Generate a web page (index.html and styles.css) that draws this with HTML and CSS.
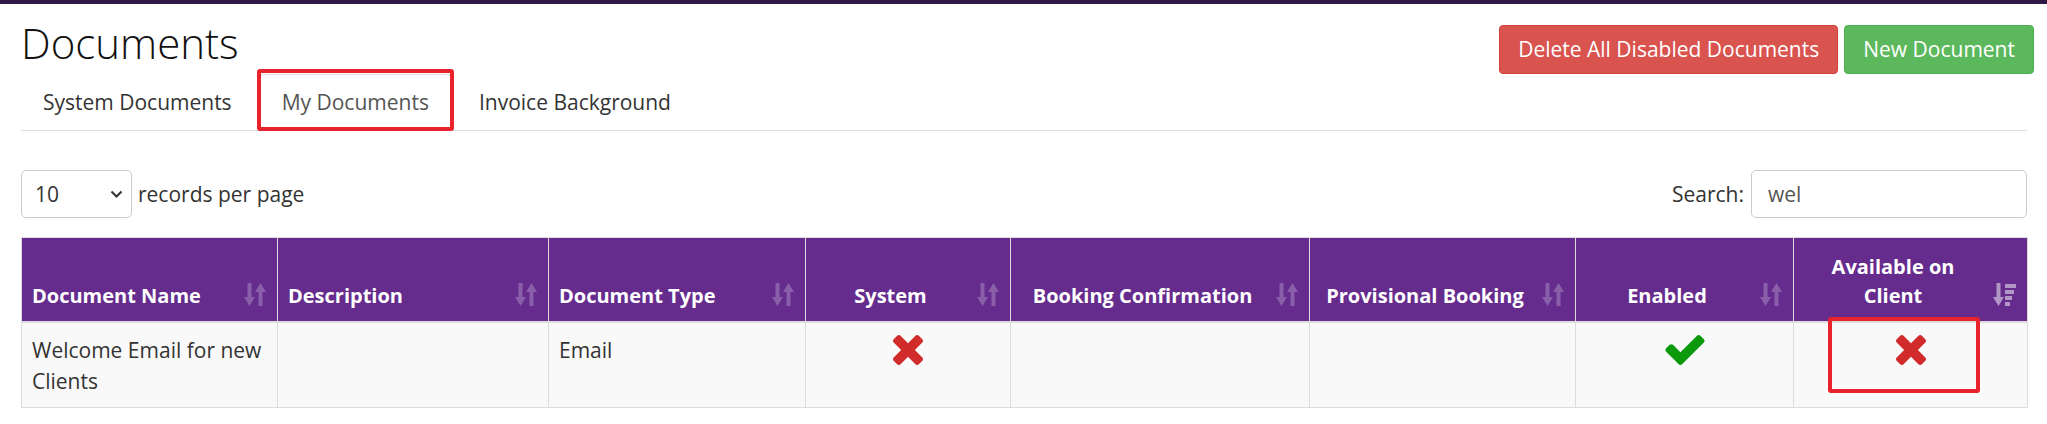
FILE: index.html
```html
<!DOCTYPE html>
<html lang="en">
<head>
    <meta charset="UTF-8">
    <meta name="viewport" content="width=device-width, initial-scale=1.0">
    <title>Documents</title>
    <link rel="stylesheet" href="styles.css">
</head>
<body>
    <div class="topbar"></div>

    <div class="page">
        <div class="header">
            <h1>Documents</h1>
            <div class="actions">
                <button type="button" class="btn btn-danger">Delete All Disabled Documents</button>
                <button type="button" class="btn btn-success">New Document</button>
            </div>
        </div>

        <ul class="tabs">
            <li><a href="#">System Documents</a></li>
            <li class="active"><a href="#">My Documents</a><span class="annot annot-tab"></span></li>
            <li><a href="#">Invoice Background</a></li>
        </ul>

        <!-- records per page + search -->
        <div class="toolbar">
            <label class="length">
                <span class="select-wrap">
                    <select>
                        <option>10</option>
                        <option>25</option>
                        <option>50</option>
                    </select>
                    <svg class="chevron" width="13" height="9" viewBox="0 0 13 9"><path d="M1.5 1.5 L6.5 6.5 L11.5 1.5" fill="none" stroke="#333" stroke-width="2"/></svg>
                </span>
                records per page
            </label>
            <label class="search">
                Search:
                <input type="text" value="wel">
            </label>
        </div>

        <table class="grid">
            <colgroup>
                <col style="width:256px">
                <col style="width:271px">
                <col style="width:257px">
                <col style="width:205px">
                <col style="width:299px">
                <col style="width:266px">
                <col style="width:218px">
                <col style="width:234px">
            </colgroup>
            <thead>
                <tr>
                    <th>Document Name<svg class="sort" viewBox="0 0 22 23"><path d="M3.5 0h4v14h3.5l-5.5 9-5.5-9h3.5z M14.5 23h4v-14h3.5l-5.5-9-5.5 9h3.5z"/></svg></th>
                    <th>Description<svg class="sort" viewBox="0 0 22 23"><path d="M3.5 0h4v14h3.5l-5.5 9-5.5-9h3.5z M14.5 23h4v-14h3.5l-5.5-9-5.5 9h3.5z"/></svg></th>
                    <th>Document Type<svg class="sort" viewBox="0 0 22 23"><path d="M3.5 0h4v14h3.5l-5.5 9-5.5-9h3.5z M14.5 23h4v-14h3.5l-5.5-9-5.5 9h3.5z"/></svg></th>
                    <th class="center">System<svg class="sort" viewBox="0 0 22 23"><path d="M3.5 0h4v14h3.5l-5.5 9-5.5-9h3.5z M14.5 23h4v-14h3.5l-5.5-9-5.5 9h3.5z"/></svg></th>
                    <th class="center">Booking Confirmation<svg class="sort" viewBox="0 0 22 23"><path d="M3.5 0h4v14h3.5l-5.5 9-5.5-9h3.5z M14.5 23h4v-14h3.5l-5.5-9-5.5 9h3.5z"/></svg></th>
                    <th class="center">Provisional Booking<svg class="sort" viewBox="0 0 22 23"><path d="M3.5 0h4v14h3.5l-5.5 9-5.5-9h3.5z M14.5 23h4v-14h3.5l-5.5-9-5.5 9h3.5z"/></svg></th>
                    <th class="center">Enabled<svg class="sort" viewBox="0 0 22 23"><path d="M3.5 0h4v14h3.5l-5.5 9-5.5-9h3.5z M14.5 23h4v-14h3.5l-5.5-9-5.5 9h3.5z"/></svg></th>
                    <th class="center">Available on Client<svg class="sort sorted" viewBox="0 0 23 23"><path d="M3.5 0h4v14h3.5l-5.5 9-5.5-9h3.5z M12 1h11v4h-11z M12 7h9v4h-9z M12 13h7v4h-7z M12 19h5v4h-5z"/></svg></th>
                </tr>
            </thead>
            <tbody>
                <tr>
                    <td>Welcome Email for new Clients</td>
                    <td></td>
                    <td>Email</td>
                    <td class="center">
                        <svg class="icon-no" viewBox="302 366 1188 1188"><path d="M1490 1322q0 40-28 68l-136 136q-28 28-68 28t-68-28l-294-294-294 294q-28 28-68 28t-68-28l-136-136q-28-28-28-68t28-68l294-294-294-294q-28-28-28-68t28-68l136-136q28-28 68-28t68 28l294 294 294-294q28-28 68-28t68 28l136 136q28 28 28 68t-28 68l-294 294 294 294q28 28 28 68z"/></svg>
                    </td>
                    <td></td>
                    <td></td>
                    <td class="center">
                        <svg class="icon-yes" viewBox="121 334 1550 1188"><path d="M1671 566q0 40-28 68l-724 724-136 136q-28 28-68 28t-68-28l-136-136-362-362q-28-28-28-68t28-68l136-136q28-28 68-28t68 28l294 295 656-657q28-28 68-28t68 28l136 136q28 28 28 68z"/></svg>
                    </td>
                    <td class="center annotated">
                        <svg class="icon-no" viewBox="302 366 1188 1188"><path d="M1490 1322q0 40-28 68l-136 136q-28 28-68 28t-68-28l-294-294-294 294q-28 28-68 28t-68-28l-136-136q-28-28-28-68t28-68l294-294-294-294q-28-28-28-68t28-68l136-136q28-28 68-28t68 28l294 294 294-294q28-28 68-28t68 28l136 136q28 28 28 68t-28 68l-294 294 294 294q28 28 28 68z"/></svg>
                        <span class="annot annot-cell"></span>
                    </td>
                </tr>
            </tbody>
        </table>
    </div>
</body>
</html>
```

FILE: styles.css
```css
/* base */
body {
    margin: 0;
    background-color: #fff;
    font-family: "Open Sans", "Liberation Sans", sans-serif;
    font-size: 21px;
    line-height: 29px;
    color: #333;
}

.topbar {
    height: 4px;
    background-color: #2f1846;
}

.page {
    padding: 0 20px 0 21px;
}

/* title + buttons */
.header {
    display: flex;
    justify-content: space-between;
    align-items: flex-start;
    height: 70px;
}

h1 {
    margin: 15px 0 0;
    font-size: 42px;
    line-height: 47px;
    font-weight: 300;
    color: #111;
}

.actions {
    display: flex;
    gap: 6px;
    margin-top: 21px;
    margin-right: -7px;
}

.btn {
    padding: 9px 18px;
    border: 1px solid transparent;
    border-radius: 4px;
    font-family: inherit;
    font-size: 21px;
    line-height: 29px;
    color: #fff;
    cursor: pointer;
}

.btn-danger {
    background-color: #d9534f;
    border-color: #d43f3a;
}

.btn-success {
    background-color: #5cb85c;
    border-color: #4cae4c;
}

/* tabs */
.tabs {
    display: flex;
    margin: 0;
    padding: 0;
    list-style: none;
    border-bottom: 1px solid #ddd;
}

.tabs li {
    position: relative;
    margin-right: 6px;
    margin-bottom: -1px;
}

.tabs a {
    display: block;
    padding: 13px 21px;
    border: 1px solid transparent;
    border-radius: 4px 4px 0 0;
    color: #333;
    text-decoration: none;
}

.tabs .active a {
    color: #555;
    background-color: #fff;
    border-color: #ddd #ddd transparent;
}

/* red highlight boxes drawn over the screenshot */
.annot {
    position: absolute;
    border: 4px solid #e8232b;
    border-radius: 3px;
    pointer-events: none;
}

.annot-tab {
    left: -3px;
    right: -3px;
    top: -5px;
    bottom: 0;
}

.annot-cell {
    left: 34px;
    top: -6px;
    width: 152px;
    height: 76px;
    box-sizing: border-box;
}

/* records per page / search */
.toolbar {
    display: flex;
    justify-content: space-between;
    align-items: center;
    margin-top: 39px;
}

.length,
.search {
    display: flex;
    align-items: center;
    gap: 6px;
}

.select-wrap {
    position: relative;
    display: inline-block;
}

.select-wrap select {
    appearance: none;
    -webkit-appearance: none;
    width: 111px;
    height: 48px;
    padding: 0 0 0 13px;
    border: 1px solid #ccc;
    border-radius: 5px;
    background-color: #fff;
    font-family: inherit;
    font-size: 21px;
    color: #333;
}

.chevron {
    position: absolute;
    right: 9px;
    top: 20px;
}

.search {
    gap: 7px;
}

.search input {
    width: 276px;
    height: 48px;
    box-sizing: border-box;
    padding: 0 16px;
    border: 1px solid #ccc;
    border-radius: 5px;
    font-family: inherit;
    font-size: 21px;
    color: #555;
}

/* table */
.grid {
    width: 2006px;
    margin-top: 19px;
    table-layout: fixed;
    border-collapse: collapse;
    border: 1px solid #ddd;
}

.grid th,
.grid td {
    border: 1px solid #ddd;
    padding: 12px 12px 10px 10px;
    text-align: left;
}

.grid th {
    position: relative;
    padding-top: 14px;
    padding-bottom: 11px;
    padding-right: 45px;
    vertical-align: bottom;
    background-color: #652c8e;
    color: #fff;
    font-weight: 700;
    font-size: 20px;
    line-height: 29px;
    border-bottom: 2px solid #ddd;
}

.grid td {
    position: relative;
    vertical-align: top;
    background-color: #f9f9f9;
    line-height: 31px;
    height: 62px;
}

.grid .center {
    text-align: center;
}

.grid td.center {
    padding-left: 12px;
}

.sort {
    position: absolute;
    right: 11px;
    bottom: 15px;
    width: 22px;
    height: 23px;
    fill: #fff;
    opacity: 0.24;
}

.sort.sorted {
    width: 23px;
    opacity: 0.5;
}

.icon-no {
    display: inline-block;
    width: 32px;
    height: 30px;
    margin-top: 0;
    fill: #d12b2b;
    vertical-align: top;
}

.icon-yes {
    display: inline-block;
    width: 40px;
    height: 30px;
    margin-top: 0;
    fill: #0c9a0c;
    vertical-align: top;
}
```
